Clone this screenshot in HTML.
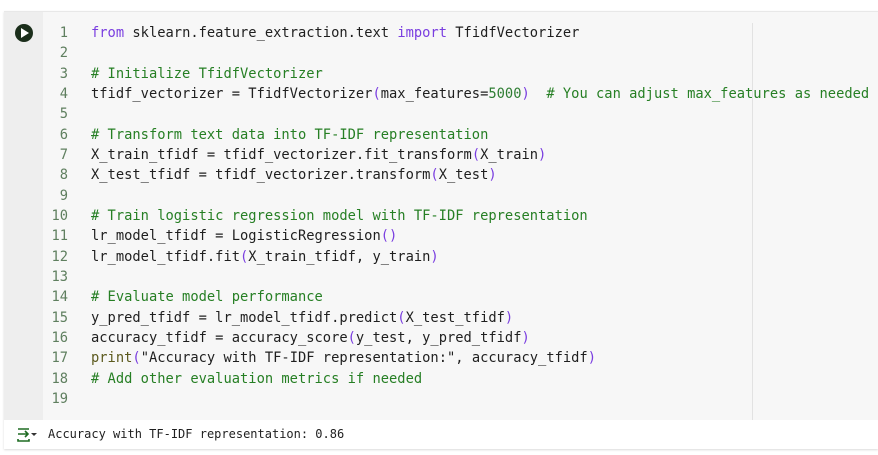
<!DOCTYPE html>
<html><head><meta charset="utf-8"><style>
body{margin:0;width:878px;height:455px;background:#fff;overflow:hidden;font-family:"DejaVu Sans Mono","Liberation Mono",monospace;}
.cell{position:absolute;left:4px;top:11px;width:874px;height:437px;background:#f7f7f7;border-top:1px solid #e8e8e8;box-shadow:0 1px 2px rgba(0,0,0,.15);}
.gut{position:absolute;left:0;top:0;width:39px;height:408px;background:#eeeeee;}
.vline{position:absolute;left:748px;top:11px;width:1px;height:397px;background:#e2e2e2;}
.run{position:absolute;left:11px;top:12px;width:18px;height:18px;border-radius:50%;background:#1b2e1b;}
.run:after{content:"";position:absolute;left:6px;top:4px;border-left:8px solid #fff;border-top:5px solid transparent;border-bottom:5px solid transparent;}
.code{position:absolute;left:0;top:11px;font-size:13.75px;line-height:20.33px;white-space:pre;color:#1f1f1f;}
.ln{display:inline-block;width:64px;text-align:right;color:#5f7f5f;margin-right:23px;}
.k{color:#7a3ee0}.c{color:#267f24}.p{color:#7a3ee0}.n{color:#2e7d32}.f{color:#5c5a1e}
.out{position:absolute;left:0;top:408px;width:874px;height:29px;background:#fff;}
.otxt{position:absolute;left:44px;top:7px;font-size:12px;color:#1f1f1f;white-space:pre;}
</style></head><body>
<div class="cell">
<div class="gut"></div>
<div class="vline"></div>
<div class="run"></div>
<div class="code"><span class="ln">1</span><span class="k">from</span> sklearn.feature_extraction.text <span class="k">import</span> TfidfVectorizer
<span class="ln">2</span>
<span class="ln">3</span><span class="c"># Initialize TfidfVectorizer</span>
<span class="ln">4</span>tfidf_vectorizer = TfidfVectorizer<span class="p">(</span>max_features=<span class="n">5000</span><span class="p">)</span>  <span class="c"># You can adjust max_features as needed</span>
<span class="ln">5</span>
<span class="ln">6</span><span class="c"># Transform text data into TF-IDF representation</span>
<span class="ln">7</span>X_train_tfidf = tfidf_vectorizer.fit_transform<span class="p">(</span>X_train<span class="p">)</span>
<span class="ln">8</span>X_test_tfidf = tfidf_vectorizer.transform<span class="p">(</span>X_test<span class="p">)</span>
<span class="ln">9</span>
<span class="ln">10</span><span class="c"># Train logistic regression model with TF-IDF representation</span>
<span class="ln">11</span>lr_model_tfidf = LogisticRegression<span class="p">()</span>
<span class="ln">12</span>lr_model_tfidf.fit<span class="p">(</span>X_train_tfidf, y_train<span class="p">)</span>
<span class="ln">13</span>
<span class="ln">14</span><span class="c"># Evaluate model performance</span>
<span class="ln">15</span>y_pred_tfidf = lr_model_tfidf.predict<span class="p">(</span>X_test_tfidf<span class="p">)</span>
<span class="ln">16</span>accuracy_tfidf = accuracy_score<span class="p">(</span>y_test, y_pred_tfidf<span class="p">)</span>
<span class="ln">17</span><span class="f">print</span><span class="p">(</span>"Accuracy with TF-IDF representation:", accuracy_tfidf<span class="p">)</span>
<span class="ln">18</span><span class="c"># Add other evaluation metrics if needed</span>
<span class="ln">19</span></div>
<div class="out">
<svg style="position:absolute;left:12px;top:7px" width="24" height="16" viewBox="0 0 24 16"><path d="M2 2H13M2 7H12M9 4l3 3-3 3M2 12v2H13v-2" stroke="#1e6b22" stroke-width="1.6" fill="none"/><path d="M15 6h6l-3 3z" fill="#333"/></svg>
<div class="otxt">Accuracy with TF-IDF representation: 0.86</div>
</div>
</div>
</body></html>
